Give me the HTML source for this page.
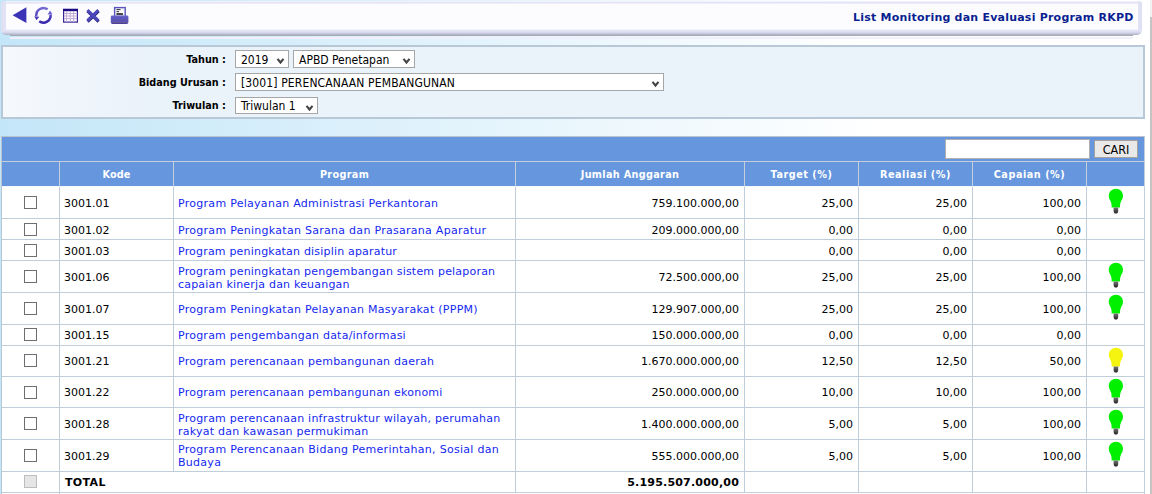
<!DOCTYPE html>
<html>
<head>
<meta charset="utf-8">
<title>List Monitoring dan Evaluasi Program RKPD</title>
<style>
html,body{margin:0;padding:0;}
body{width:1152px;height:494px;overflow:hidden;position:relative;font-family:"DejaVu Sans","Liberation Sans",sans-serif;font-size:11px;color:#000;
background:linear-gradient(to right,#c3e6f8 0px,#ffffff 880px,#ffffff 1152px);}
#sb{position:absolute;left:1150px;top:0;width:2px;height:494px;background:#c4c4c4;}
#sbtop{position:absolute;left:1150px;top:0;width:2px;height:17px;background:#f1f1f1;}
#tbm{position:absolute;left:10px;top:1px;width:1123px;height:35px;background:linear-gradient(to bottom,#f3f4fc 0,#f0f1fa 0.8px,#e3e3f5 1.2px,#e4e4f6 2px,#f4f4fc 2.8px,#fcfcff 3.5px,#fcfcff 28px,#e6e6f8 29.2px,#dedef4 31px,#c9cbdf 32.4px,#b0b4c4 33.6px,#a5aab7 34.6px);}
#tbl,#tbr{position:absolute;top:1px;width:9px;height:34px;}
#tbl{left:1px;border-radius:3px 0 0 5px;background:linear-gradient(to right,#dfdff4 0,#e3e3f6 5px,rgba(227,227,246,0) 5px) 0 0/100% 29px no-repeat,linear-gradient(to bottom,#f3f4fc 0,#f0f1fa 0.8px,#e3e3f5 1.2px,#e4e4f6 2px,#f4f4fc 2.8px,#fcfcff 3.5px,#fcfcff 28px,#e4e4f7 29.2px,#dcdcf2 31px,#c8cade 32.4px,#b4b7c9 33.4px,#aeb1c4 34px);}
#tbr{left:1133px;border-radius:0 3px 5px 0;background:linear-gradient(to left,#dfdff4 0,#e3e3f6 4px,rgba(227,227,246,0) 4px) 0 0/100% 29px no-repeat,linear-gradient(to bottom,#f3f4fc 0,#f0f1fa 0.8px,#e3e3f5 1.2px,#e4e4f6 2px,#f4f4fc 2.8px,#fcfcff 3.5px,#fcfcff 28px,#e4e4f7 29.2px,#dcdcf2 31px,#c8cade 32.4px,#b4b7c9 33.4px,#aeb1c4 34px);}
#tbline{position:absolute;left:10px;top:37px;width:1123px;height:2px;background:#f1effb;}
#title{position:absolute;left:853px;top:11px;font-weight:bold;font-size:11px;letter-spacing:0.22px;color:#0a1f90;white-space:nowrap;line-height:13px;}
.ico{position:absolute;overflow:visible;}
#filter{position:absolute;left:1px;top:45px;width:1140px;height:70px;border:2px solid #b9c8d6;background:linear-gradient(to right,#f6f9fc 0,#f0f5fb 60px,#eaf2fa 150px);}
th{letter-spacing:0.32px}th.p{letter-spacing:0.52px}.lbl{position:absolute;left:0;width:226px;text-align:right;font-weight:bold;font-size:9.7px;white-space:nowrap;line-height:13px;}
.sel{position:absolute;height:15px;padding-top:1px;border:1px solid #a6a6a6;background:#fff;font-family:"DejaVu Sans Condensed","DejaVu Sans","Liberation Sans",sans-serif;font-stretch:condensed;font-size:12px;line-height:16px;padding-left:5px;box-sizing:content-box;white-space:nowrap;}
.sel svg{position:absolute;right:3px;top:7px;}
table{border-collapse:separate;border-spacing:0;position:absolute;left:1px;top:136px;width:1144px;table-layout:fixed;border-left:1px solid #bac6d3;border-top:1px solid #b9c3ce;}
td,th{border-right:1px solid #c0cddb;border-bottom:1px solid #c0cddb;padding:2px 5px 0 4px;font-size:11px;line-height:13px;box-sizing:border-box;overflow:hidden;white-space:nowrap;}
th{background:#6596de;color:#fff;font-weight:bold;font-size:9.7px;height:25px;border-color:#c6cedb;text-align:center;padding:0;}
tr.h2 th{border-bottom-color:#f4f7fb;}
th.s{border-right-color:#c0cddb;}
td{background:#fff;}
td.r{text-align:right;}
td.c{text-align:center;padding:0;}
td b{letter-spacing:0.35px;}
td.r b{letter-spacing:0.2px;}
a{color:#1428f0;text-decoration:none;letter-spacing:0.28px;}
.cb{display:inline-block;width:11px;height:11px;border:1px solid #6e6e6e;background:#fff;vertical-align:middle;position:relative;top:0px;left:0px}
.cb.dis{border-color:#bdbdbd;background:#e6e6e6;}
.bulb{width:16px;height:26px;display:inline-block;vertical-align:middle;position:relative;left:0px;top:-2px;}
tr.u td,tr.v td{padding-top:0}
tr.u .cb{top:-1px}
tr.u .bulb,tr.v .bulb{top:-1px}
#q{position:absolute;left:945px;top:139px;width:143px;height:18px;border:1px solid #b0b0b0;background:#fff;box-sizing:content-box;}
#cari{position:absolute;left:1094px;top:140px;width:42px;height:15px;padding-top:1px;border:1px solid #a5a29d;background:#e9e9e9;font-family:"DejaVu Sans Condensed","DejaVu Sans",sans-serif;font-size:12.5px;line-height:16px;text-align:center;color:#000;}
</style>
</head>
<body>
<svg width="0" height="0" style="position:absolute">
<defs>
<linearGradient id="bs" x1="0" y1="0" x2="0" y2="1"><stop offset="0" stop-color="#777"/><stop offset="1" stop-color="#222"/></linearGradient>
<g id="bg"><path d="M8,0.7 C12,0.7 15,3.8 15,7.8 C15,10.6 13.6,12.2 12.8,14 C12.1,15.6 12,17 12,19.4 L3.6,19.4 C3.6,17 3.6,15.6 2.9,14 C2.1,12.2 0.8,10.6 0.8,7.8 C0.8,3.8 4,0.7 8,0.7Z" fill="#00f000"/><path d="M5.6,19.4h4.6v3.6c0,1.6 -1,2.6 -2.3,2.6s-2.3,-1 -2.3,-2.6z" fill="url(#bs)"/></g>
<g id="by"><path d="M8,0.7 C12,0.7 15,3.8 15,7.8 C15,10.6 13.6,12.2 12.8,14 C12.1,15.6 12,17 12,19.4 L3.6,19.4 C3.6,17 3.6,15.6 2.9,14 C2.1,12.2 0.8,10.6 0.8,7.8 C0.8,3.8 4,0.7 8,0.7Z" fill="#f4f410"/><path d="M5.6,19.4h4.6v3.6c0,1.6 -1,2.6 -2.3,2.6s-2.3,-1 -2.3,-2.6z" fill="url(#bs)"/></g>
</defs>
</svg>
<div id="tbm"></div><div id="tbl"></div><div id="tbr"></div>
<div id="tbline"></div>
<svg class="ico" style="left:0;top:0" width="140" height="36" viewBox="0 0 140 36">
<defs>
<linearGradient id="pg" x1="0" y1="0" x2="0" y2="1"><stop offset="0" stop-color="#6c6ad2"/><stop offset="0.25" stop-color="#5d58b8"/><stop offset="0.8" stop-color="#5a55b4"/><stop offset="1" stop-color="#3b3690"/></linearGradient>
<linearGradient id="rg" gradientUnits="userSpaceOnUse" x1="0" y1="7" x2="0" y2="24"><stop offset="0" stop-color="#7a6fd6"/><stop offset="0.45" stop-color="#5143c0"/><stop offset="1" stop-color="#3220a6"/></linearGradient>
</defs>
<polygon points="12.6,15.2 26.4,7.3 26.4,22.9" fill="#3b34b6"/>
<g fill="none" stroke="url(#rg)" stroke-width="2.5">
<path d="M47.6,9.2 A7.3,7.3 0 0 0 36.3,15.8"/>
<path d="M39.2,21.3 A7.3,7.3 0 0 0 50.6,14.6"/>
</g>
<polygon points="34.3,16.2 39.2,16.7 36.5,20.3" fill="#4030b4"/>
<polygon points="47.6,14.6 52.4,14.3 50.1,10.4" fill="#6a5ecc"/>
<rect x="63.6" y="9.5" width="13.8" height="12.6" fill="#fff" stroke="#3a2596" stroke-width="1.2"/>
<rect x="63" y="8.8" width="15" height="2.4" fill="#1b0c84"/>
<g stroke="#bfa9d6" stroke-width="1" fill="none">
<path d="M66.6,11v11M70.2,11v11M73.6,11v11M64,13.5h13M64,16h13M64,18.6h13"/>
</g>
<g stroke-linecap="butt" fill="none">
<path d="M87.6,11.2L98.6,21.6M98.6,11.2L87.6,21.6" stroke="#2a2476" stroke-width="3"/>
<path d="M87.4,10.2L98.4,20.6M98.4,10.2L87.4,20.6" stroke="#4d48ba" stroke-width="3"/>
</g>
<rect x="114.6" y="7.6" width="10.6" height="9" fill="#f4f4f4" stroke="#5a55c0" stroke-width="1.4"/>
<path d="M116.5,9.6h4M116.5,11.6h2.5M116.5,13.6h6.5M116.5,14.6h6.5" stroke="#333" stroke-width="1" fill="none"/>
<rect x="121" y="10.5" width="3" height="2.6" fill="#fff"/>
<path d="M112,15.5h15.2q1.2,0 1.2,1.2v5.6q0,1.8 -1.8,1.8h-14q-1.8,0 -1.8,-1.8v-5.6q0,-1.2 1.2,-1.2z" fill="url(#pg)"/>
<path d="M112,22.6h15.4" stroke="#7a5a78" stroke-width="0.6"/>
</svg>

<div id="title">List Monitoring dan Evaluasi Program RKPD</div>
<div id="filter"></div>
<div class="lbl" style="top:53px">Tahun :</div>
<div class="lbl" style="top:76px">Bidang Urusan :</div>
<div class="lbl" style="top:99px">Triwulan :</div>
<div class="sel" style="left:235px;top:50px;width:47px">2019<svg width="9" height="7" viewBox="0 0 9 7"><path d="M1.5,0.9 L4.5,4.5 L7.5,0.9" fill="none" stroke="#444" stroke-width="2.1"/></svg></div>
<div class="sel" style="left:293px;top:50px;width:115px">APBD Penetapan<svg width="9" height="7" viewBox="0 0 9 7"><path d="M1.5,0.9 L4.5,4.5 L7.5,0.9" fill="none" stroke="#444" stroke-width="2.1"/></svg></div>
<div class="sel" style="left:235px;top:73px;width:422px;letter-spacing:0.13px">[3001] PERENCANAAN PEMBANGUNAN<svg width="9" height="7" viewBox="0 0 9 7"><path d="M1.5,0.9 L4.5,4.5 L7.5,0.9" fill="none" stroke="#444" stroke-width="2.1"/></svg></div>
<div class="sel" style="left:235px;top:97px;width:76px;height:15px;padding-top:0">Triwulan 1<svg width="9" height="7" viewBox="0 0 9 7"><path d="M1.5,0.9 L4.5,4.5 L7.5,0.9" fill="none" stroke="#444" stroke-width="2.1"/></svg></div>
<table>
<colgroup><col style="width:58px"><col style="width:114px"><col style="width:342px"><col style="width:229px"><col style="width:114px"><col style="width:114px"><col style="width:114px"><col style="width:58px"></colgroup>
<tr><th class="s" colspan="8"></th></tr>
<tr class="h2"><th></th><th style="letter-spacing:0.12px">Kode</th><th>Program</th><th>Jumlah Anggaran</th><th class="p">Target (%)</th><th class="p">Realiasi (%)</th><th class="p">Capaian (%)</th><th class="s"></th></tr>
<tr style="height:32px"><td class="c"><span class="cb"></span></td><td>3001.01</td><td><a>Program Pelayanan Administrasi Perkantoran</a></td><td class="r">759.100.000,00</td><td class="r">25,00</td><td class="r">25,00</td><td class="r">100,00</td><td class="c"><svg class="bulb"><use href="#bg"/></svg></td></tr>
<tr style="height:21px"><td class="c"><span class="cb"></span></td><td>3001.02</td><td><a>Program Peningkatan Sarana dan Prasarana Aparatur</a></td><td class="r">209.000.000,00</td><td class="r">0,00</td><td class="r">0,00</td><td class="r">0,00</td><td class="c"></td></tr>
<tr style="height:21px"><td class="c"><span class="cb"></span></td><td>3001.03</td><td><a style="letter-spacing:0.19px">Program peningkatan disiplin aparatur</a></td><td class="r"></td><td class="r">0,00</td><td class="r">0,00</td><td class="r">0,00</td><td class="c"></td></tr>
<tr style="height:32px"><td class="c"><span class="cb"></span></td><td>3001.06</td><td><a style="letter-spacing:0.2px">Program peningkatan pengembangan sistem pelaporan<br>capaian kinerja dan keuangan</a></td><td class="r">72.500.000,00</td><td class="r">25,00</td><td class="r">25,00</td><td class="r">100,00</td><td class="c"><svg class="bulb"><use href="#bg"/></svg></td></tr>
<tr style="height:32px"><td class="c"><span class="cb"></span></td><td>3001.07</td><td><a>Program Peningkatan Pelayanan Masyarakat (PPPM)</a></td><td class="r">129.907.000,00</td><td class="r">25,00</td><td class="r">25,00</td><td class="r">100,00</td><td class="c"><svg class="bulb"><use href="#bg"/></svg></td></tr>
<tr class=u style="height:21px"><td class="c"><span class="cb"></span></td><td>3001.15</td><td><a style="letter-spacing:0.235px">Program pengembangan data/informasi</a></td><td class="r">150.000.000,00</td><td class="r">0,00</td><td class="r">0,00</td><td class="r">0,00</td><td class="c"></td></tr>
<tr class=u style="height:31px"><td class="c"><span class="cb"></span></td><td>3001.21</td><td><a style="letter-spacing:0.23px">Program perencanaan pembangunan daerah</a></td><td class="r">1.670.000.000,00</td><td class="r">12,50</td><td class="r">12,50</td><td class="r">50,00</td><td class="c"><svg class="bulb"><use href="#by"/></svg></td></tr>
<tr class=v style="height:31px"><td class="c"><span class="cb"></span></td><td>3001.22</td><td><a style="letter-spacing:0.23px">Program perencanaan pembangunan ekonomi</a></td><td class="r">250.000.000,00</td><td class="r">10,00</td><td class="r">10,00</td><td class="r">100,00</td><td class="c"><svg class="bulb"><use href="#bg"/></svg></td></tr>
<tr style="height:32px"><td class="c"><span class="cb"></span></td><td>3001.28</td><td><a style="letter-spacing:0.235px">Program perencanaan infrastruktur wilayah, perumahan<br>rakyat dan kawasan permukiman</a></td><td class="r">1.400.000.000,00</td><td class="r">5,00</td><td class="r">5,00</td><td class="r">100,00</td><td class="c"><svg class="bulb"><use href="#bg"/></svg></td></tr>
<tr style="height:32px"><td class="c"><span class="cb"></span></td><td>3001.29</td><td><a style="position:relative;top:-1px;display:inline-block">Program Perencanaan Bidang Pemerintahan, Sosial dan<br>Budaya</a></td><td class="r">555.000.000,00</td><td class="r">5,00</td><td class="r">5,00</td><td class="r">100,00</td><td class="c"><svg class="bulb"><use href="#bg"/></svg></td></tr>
<tr class="u" style="height:21px"><td class="c"><span class="cb dis"></span></td><td colspan="2" style="padding-left:5px"><b>TOTAL</b></td><td class="r"><b>5.195.507.000,00</b></td><td></td><td></td><td></td><td></td></tr>
<tr style="height:21px"><td></td><td colspan="7"></td></tr>
</table>
<div id="q"></div>
<div id="cari">CARI</div>
<div id="sb"></div><div id="sbtop"></div>
</body>
</html>
